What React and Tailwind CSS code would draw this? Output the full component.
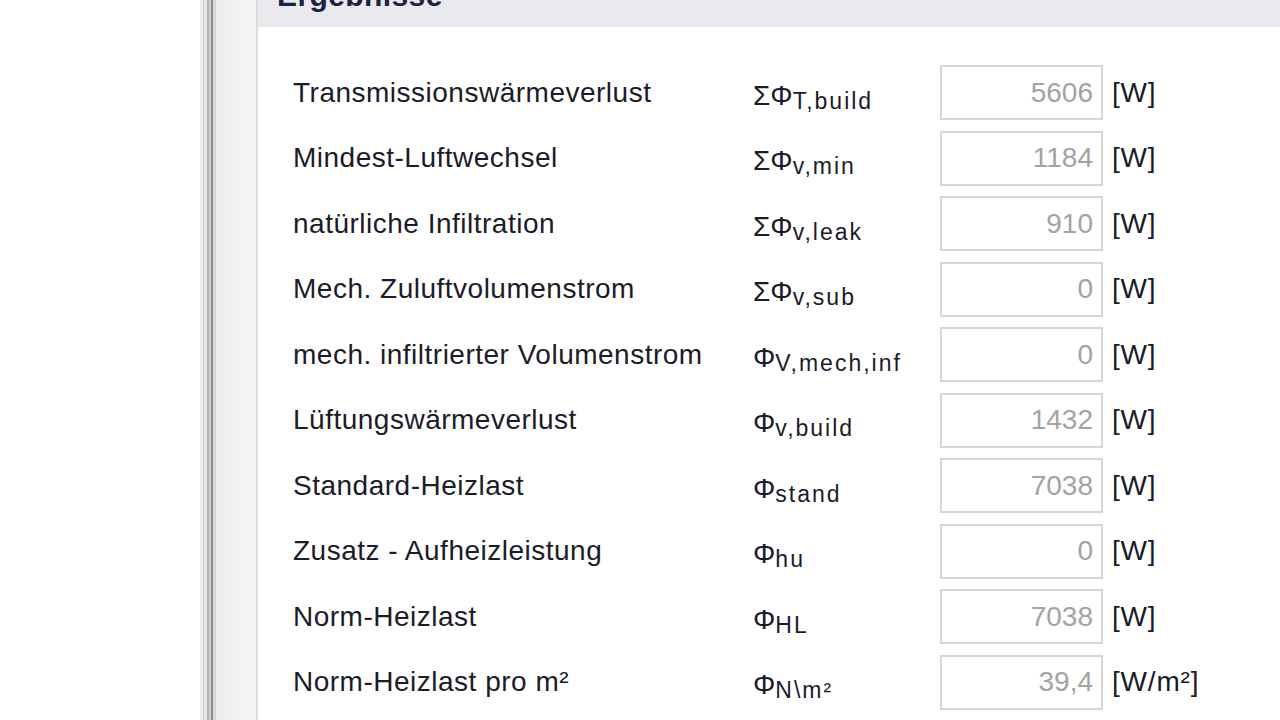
// Ergebnisse panel – zoomed heat-load results form
const rows = [
  { label: 'Transmissionswärmeverlust', sym: 'ΣΦ', sub: 'T,build', value: '5606', unit: '[W]' },
  { label: 'Mindest-Luftwechsel', sym: 'ΣΦ', sub: 'v,min', value: '1184', unit: '[W]' },
  { label: 'natürliche Infiltration', sym: 'ΣΦ', sub: 'v,leak', value: '910', unit: '[W]' },
  { label: 'Mech. Zuluftvolumenstrom', sym: 'ΣΦ', sub: 'v,sub', value: '0', unit: '[W]' },
  { label: 'mech. infiltrierter Volumenstrom', sym: 'Φ', sub: 'V,mech,inf', value: '0', unit: '[W]' },
  { label: 'Lüftungswärmeverlust', sym: 'Φ', sub: 'v,build', value: '1432', unit: '[W]' },
  { label: 'Standard-Heizlast', sym: 'Φ', sub: 'stand', value: '7038', unit: '[W]' },
  { label: 'Zusatz - Aufheizleistung', sym: 'Φ', sub: 'hu', value: '0', unit: '[W]' },
  { label: 'Norm-Heizlast', sym: 'Φ', sub: 'HL', value: '7038', unit: '[W]' },
  { label: 'Norm-Heizlast pro m²', sym: 'Φ', sub: 'N\\m²', value: '39,4', unit: '[W/m²]' },
];

export default function App() {
  return (
    <div className="flex w-[1280px] h-[720px] overflow-hidden bg-white font-['Liberation_Sans',Arial,sans-serif] text-[#1b1b2a]">
      {/* left gutter + splitter lines */}
      <div className="w-[200px] shrink-0 bg-white" />
      <div className="w-[3px] shrink-0 bg-[#ececec]" />
      <div className="w-[1px] shrink-0 bg-[#d2d2d2]" />
      <div className="w-[3px] shrink-0 bg-[#e4e4e4]" />
      <div className="w-[2px] shrink-0 bg-[#b4b4b4]" />
      <div className="w-[2px] shrink-0 bg-[#cfcfcf]" />
      <div className="w-[2px] shrink-0 bg-[#8f8f8f]" />
      <div className="w-[3px] shrink-0 bg-[#d6d6d6]" />
      <div className="w-[40px] shrink-0 bg-gradient-to-r from-[#ededed] to-[#f6f6f6]" />
      <div className="w-[2px] shrink-0 bg-[#dcdcdc]" />

      {/* panel */}
      <div className="flex-1 flex flex-col bg-white">
        <div className="h-[27px] shrink-0 bg-[#e9e9ee] overflow-hidden pl-[19px]">
          <div className="-mt-[22px] text-[30px] leading-[36px] font-bold tracking-[0.4px] text-[#1a2440]">Ergebnisse</div>
        </div>

        <div className="flex flex-col gap-[10.55px] pt-[38px] pl-[35px]">
          {rows.map((r) => (
            <div key={r.label} className="flex items-center h-[55px]">
              <div className="w-[460px] shrink-0 text-[28px] leading-none tracking-[0.5px] whitespace-nowrap">{r.label}</div>
              <div className="w-[187px] shrink-0 text-[28px] leading-none whitespace-nowrap pt-[6px]">
                {r.sym}
                <span className="text-[23px] relative top-[4px] tracking-[2px]">{r.sub}</span>
              </div>
              <div className="w-[163px] h-[55px] shrink-0 border-2 border-[#d6d6d6] bg-white flex items-center justify-end pr-[8px] text-[28px] text-[#a3a3a3]">
                {r.value}
              </div>
              <div className="pl-[9px] text-[28px] leading-none tracking-[0.8px] whitespace-nowrap">{r.unit}</div>
            </div>
          ))}
        </div>
      </div>
    </div>
  );
}
